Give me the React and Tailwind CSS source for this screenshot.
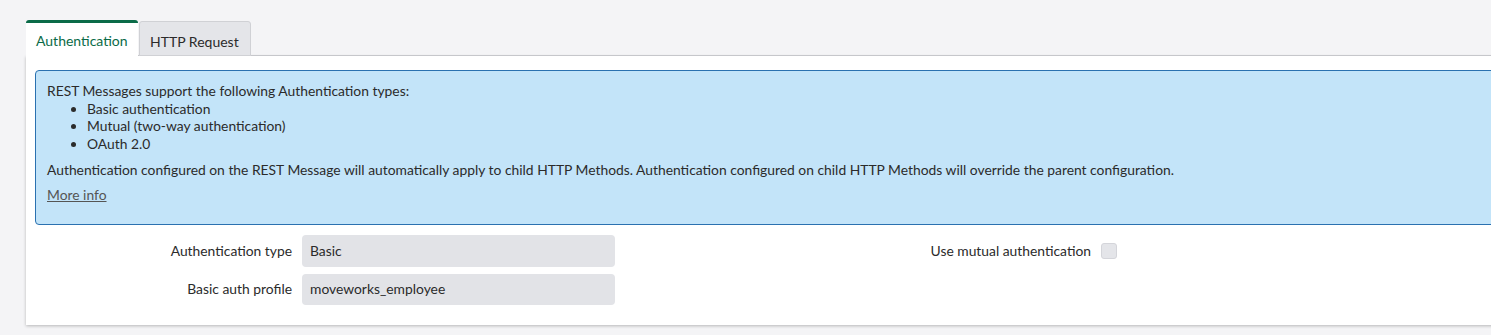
export default function App() {
  return (
    <div className="w-full h-[335px] overflow-hidden bg-[#f4f4f6] font-['Lato','Open_Sans',sans-serif] text-[13.85px] text-[#2b2b2b]">
      <div className="pl-[26px] pt-[21px]">
        {/* Tabs */}
        <div className="flex items-end h-[35px] border-b border-[#cfd0d5]">
          <div className="h-[36px] w-[112px] -mb-px bg-white border-t-[3px] border-[#0a6b48] rounded-t-[3px] pl-[10px] pt-[7px] text-[14px] text-[#0a6b48]">
            Authentication
          </div>
          <div className="h-[35px] w-[112px] ml-px -mb-px bg-[#e4e5e9] border border-[#d0d1d5] rounded-t-[3px] pl-[10px] pt-[9px] text-[14px] text-[#2b2b2b]">
            HTTP Request
          </div>
        </div>

        {/* Panel */}
        <div className="w-[1500px] bg-white shadow-[0_1px_3px_rgba(0,0,0,0.25)] pl-[9px] pt-[14px] pb-[20px]">
          <div className="bg-[#c3e4f9] border border-[#2a71b0] rounded-[4px] pl-[11px] pt-[11px] pb-[21px] leading-[17.5px]">
            <p>REST Messages support the following Authentication types:</p>
            <ul className="list-disc pl-[40px]">
              <li>Basic authentication</li>
              <li>Mutual (two-way authentication)</li>
              <li>OAuth 2.0</li>
            </ul>
            <p className="mt-[9px]">
              Authentication configured on the REST Message will automatically apply to child HTTP Methods. Authentication configured on child HTTP Methods will override the parent configuration.
            </p>
            <p className="mt-[7px]">
              <a className="underline text-[#555]" href="#">More info</a>
            </p>
          </div>

          <div className="flex mt-[10px]">
            <div className="flex flex-col gap-[7px]">
              <div className="flex items-center">
                <span className="w-[267px] text-right pr-[10px]">Authentication type</span>
                <div className="w-[313px] h-[32px] bg-[#e2e3e7] rounded-[4px] pl-[8px] flex items-center">Basic</div>
              </div>
              <div className="flex items-center">
                <span className="w-[267px] text-right pr-[10px]">Basic auth profile</span>
                <div className="w-[313px] h-[31px] bg-[#e2e3e7] rounded-[4px] pl-[8px] flex items-center">moveworks_employee</div>
              </div>
            </div>
            <div className="flex items-center h-[32px]">
              <span className="w-[486px] text-right pr-[10px]">Use mutual authentication</span>
              <div className="w-[16px] h-[16px] bg-[#e4e5e9] border border-[#d4d5da] rounded-[3px]"></div>
            </div>
          </div>
        </div>
      </div>
    </div>
  );
}
